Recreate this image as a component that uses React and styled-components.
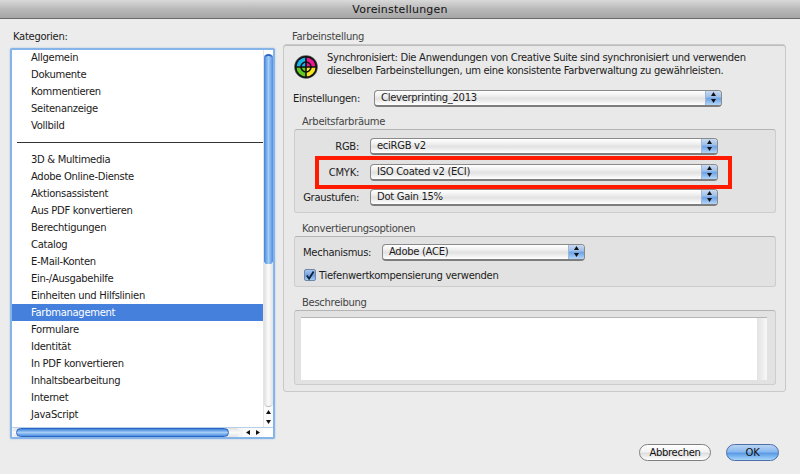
import React from "react";
import styled, { createGlobalStyle } from "styled-components";

const Global = createGlobalStyle`
  html, body { margin: 0; padding: 0; background: #ececec; }
  * { box-sizing: border-box; }
`;

const Page = styled.div`
  width: 800px;
  height: 474px;
  overflow: hidden;
  display: flex;
  flex-direction: column;
  background: #ececec;
  color: #1c1c1c;
  font-family: "DejaVu Sans", sans-serif;
  font-size: 10px;
  letter-spacing: -0.3px;
`;

const TitleBar = styled.header`
  height: 19px;
  flex: none;
  display: flex;
  align-items: center;
  justify-content: center;
  font-size: 11px;
  letter-spacing: 0.2px;
  color: #111;
  background: linear-gradient(#d9d9d9, #b9b9b9 50%, #a6a6a6);
  border-bottom: 1px solid #6c6c6c;
`;

const Main = styled.main`
  flex: 1;
  display: flex;
  padding-left: 10px;
  gap: 8px;
`;

const Sidebar = styled.section`
  width: 265px;
  display: flex;
  flex-direction: column;
`;

const SideLabel = styled.div`
  height: 14px;
  margin-top: 11px;
  margin-bottom: 4px;
  padding-left: 3px;
  line-height: 14px;
`;

const ListFrame = styled.div`
  height: 391px;
  display: flex;
  flex-direction: column;
  border: 2px solid #86b3e8;
  border-radius: 2px;
  background: #fff;
  box-shadow: 0 0 2px #9cc0ec;
`;

const ListBody = styled.div`
  flex: 1;
  min-height: 0;
  display: flex;
`;

const Rows = styled.ul`
  flex: 1;
  min-width: 0;
  list-style: none;
  margin: -1px 0 0;
  padding: 0;
  overflow: hidden;
`;

const Row = styled.li`
  height: 17px;
  line-height: 17px;
  padding-left: 19px;
  white-space: nowrap;
  color: ${(p) => (p.$active ? "#fff" : "#1c1a20")};
  background: ${(p) => (p.$active ? "#4580dc" : "transparent")};
`;

const Divider = styled.li`
  height: 17px;
  display: flex;
  align-items: center;
  padding-left: 5px;
  &::after {
    content: "";
    flex: 1;
    height: 1px;
    background: #333;
  }
`;

const VScroll = styled.div`
  width: 10px;
  flex: none;
  display: flex;
  flex-direction: column;
  background: #f6f6f6;
  border-left: 1px solid #e4e4e4;
`;

const VCap = styled.div`
  height: 4px;
  flex: none;
  background: #fff;
`;

const VThumb = styled.div`
  height: 210px;
  flex: none;
  border-radius: 5px 5px 4px 4px;
  border-top: 2px solid #2a64c4;
  background: linear-gradient(90deg, #3f82dc, #a5cdf5 50%, #4d8fe2);
`;

const VTrack = styled.div`
  flex: 1;
  border-radius: 0 0 5px 5px;
  background: linear-gradient(90deg, #e0e0e0, #fafafa 50%, #e4e4e4);
  border-bottom: 1px solid #bbb;
`;

const Arrow = styled.button`
  flex: none;
  width: ${(p) => p.$w}px;
  height: ${(p) => p.$h}px;
  padding: 0;
  border: 0;
  display: flex;
  align-items: center;
  justify-content: center;
  background: #fbfbfb;
`;

const HBar = styled.div`
  height: 10px;
  flex: none;
  display: flex;
  background: #f6f6f6;
  border-top: 1px solid #b8cfe9;
`;

const HTrack = styled.div`
  width: 228px;
  flex: none;
  display: flex;
  padding-left: 4px;
  border-radius: 5px;
  background: linear-gradient(#e0e0e0, #fafafa 50%, #e4e4e4);
`;

const HThumb = styled.div`
  width: 213px;
  border-radius: 5px;
  border: 1px solid #2a64c4;
  background: linear-gradient(#3f82dc, #a5cdf5 50%, #4d8fe2);
`;

const HEnd = styled.div`
  flex: 1;
  display: flex;
  justify-content: flex-start;
  padding-left: 3px;
`;

const HCorner = styled.div`
  width: 10px;
  flex: none;
  background: #fff;
`;

const Content = styled.section`
  width: 503px;
  display: flex;
  flex-direction: column;
`;

const Legend = styled.div`
  height: 14px;
  margin-top: ${(p) => p.$top}px;
  padding-left: ${(p) => p.$left}px;
  line-height: 14px;
  color: #444;
`;

const OuterBox = styled.div`
  height: 348px;
  padding: 0 9px 0 10px;
  border: 1px solid #c9c9c9;
  border-radius: 3px;
  background: #e9e9e9;
  box-shadow: inset 0 1px 0 #bdbdbd;
`;

const InfoRow = styled.div`
  display: flex;
  padding-top: 6px;
  gap: 9px;
`;

const InfoIcon = styled.svg`
  width: 24px;
  height: 24px;
  margin-top: 4px;
  flex: none;
`;

const InfoText = styled.p`
  margin: 0;
  line-height: 13px;
  white-space: nowrap;
`;

const SettingsRow = styled.div`
  display: flex;
  align-items: center;
  margin: 11px 0 0 -1px;
`;

const FieldLabel = styled.label`
  flex: none;
  width: ${(p) => p.$w}px;
  margin-right: ${(p) => p.$gap}px;
  text-align: ${(p) => p.$align || "left"};
  white-space: nowrap;
`;

const Group = styled.div`
  height: ${(p) => p.$h}px;
  padding: ${(p) => p.$pad}px 0 0 8px;
  border: 1px solid #cdcdcd;
  border-top-color: #b4b4b4;
  border-radius: 3px;
  background: #e2e2e2;
`;

const FieldStack = styled.div`
  display: flex;
  flex-direction: column;
  gap: 8.5px;
`;

const FieldRow = styled.div`
  position: relative;
  display: flex;
  align-items: center;
`;

const Highlight = styled.div`
  position: absolute;
  left: 12px;
  top: -8px;
  width: 417px;
  height: 33px;
  border: 4px solid #ff1a00;
  pointer-events: none;
`;

const Select = styled.div`
  width: ${(p) => p.$w}px;
  height: 17px;
  flex: none;
  display: flex;
  border: 1px solid #8a8a8a;
  border-bottom: 2px solid #7d7d7d;
  border-radius: 4px;
  overflow: hidden;
  background: linear-gradient(#ffffff, #f4f4f4 25%, #e2e2e2 55%, #f6f6f6 85%, #ffffff);
`;

const SelectValue = styled.span`
  flex: 1;
  padding-left: 6px;
  line-height: 14px;
  white-space: nowrap;
`;

const Stepper = styled.span`
  width: 16px;
  flex: none;
  display: flex;
  flex-direction: column;
  align-items: center;
  justify-content: center;
  gap: 2px;
  border-left: 1px solid #9fb6d6;
  background: linear-gradient(#c9daf2, #a0c0ea 40%, #6ea3e6 55%, #b4d6f8);
`;

const CheckRow = styled.div`
  display: flex;
  align-items: center;
  gap: 3px;
  margin: 8px 0 0 1px;
`;

const CheckBox = styled.span`
  width: 12px;
  height: 12px;
  flex: none;
  display: flex;
  align-items: center;
  justify-content: center;
  border: 1px solid #6f87a8;
  border-radius: 2px;
  background: linear-gradient(#a9c6ec, #6f9fe0 55%, #a6cdf5);
`;

const DescGroup = styled.div`
  height: 75px;
  padding: 6px 8px 4px 6px;
  border: 1px solid #cdcdcd;
  border-top-color: #b4b4b4;
  border-radius: 3px;
  background: #e2e2e2;
`;

const DescBox = styled.div`
  height: 63px;
  display: flex;
  justify-content: flex-end;
  background: #fff;
  border-top: 1px solid #b5b5b5;
`;

const DescTrack = styled.div`
  width: 10px;
  background: linear-gradient(90deg, #e2e2e2, #f8f8f8);
`;

const Footer = styled.footer`
  display: flex;
  justify-content: flex-end;
  gap: 15px;
  padding-right: 7px;
  margin-top: 52px;
`;

const Button = styled.button`
  width: ${(p) => p.$w}px;
  height: 17px;
  padding: 0;
  border-radius: 9px;
  font: inherit;
  letter-spacing: inherit;
  color: #111;
  border: 1px solid ${(p) => (p.$primary ? "#4f6ea8" : "#7f7f7f")};
  background: ${(p) =>
    p.$primary
      ? "linear-gradient(#b9d4f4, #8bb9ee 45%, #5a9ae6 55%, #a6d6fa)"
      : "linear-gradient(#ffffff, #f2f2f2 45%, #dedede 55%, #ffffff)"};
`;

const Tri = ({ d, s = 5 }) => {
  const p = {
    up: "0,4 5,4 2.5,0",
    down: "0,0 5,0 2.5,4",
    left: "4,0 4,5 0,2.5",
    right: "0,0 0,5 4,2.5",
  }[d];
  return (
    <svg width={s} height={s} viewBox="0 0 5 5" style={{ display: "block" }}>
      <polygon points={p} fill="#111" />
    </svg>
  );
};

const Dropdown = ({ w, children }) => (
  <Select $w={w}>
    <SelectValue>{children}</SelectValue>
    <Stepper>
      <Tri d="up" />
      <Tri d="down" />
    </Stepper>
  </Select>
);

const ColorIcon = () => (
  <InfoIcon viewBox="0 0 24 24">
    <circle cx="12" cy="12" r="11.8" fill="#555" />
    <circle cx="12" cy="12" r="11" fill="#111" />
    <path d="M12 12V2.5A9.5 9.5 0 0 0 2.5 12Z" fill="#19b4ea" />
    <path d="M12 12V2.5A9.5 9.5 0 0 1 21.5 12Z" fill="#ea1a90" />
    <path d="M12 12H2.5A9.5 9.5 0 0 0 12 21.5Z" fill="#5ecb1e" />
    <path d="M12 12H21.5A9.5 9.5 0 0 1 12 21.5Z" fill="#f8e71c" />
    <circle cx="12" cy="12" r="5" fill="none" stroke="#111" strokeWidth="1.6" />
    <path d="M12 1V23M1 12H23" stroke="#111" strokeWidth="1.6" />
  </InfoIcon>
);

const first = ["Allgemein", "Dokumente", "Kommentieren", "Seitenanzeige", "Vollbild"];
const second = [
  "3D & Multimedia",
  "Adobe Online-Dienste",
  "Aktionsassistent",
  "Aus PDF konvertieren",
  "Berechtigungen",
  "Catalog",
  "E-Mail-Konten",
  "Ein-/Ausgabehilfe",
  "Einheiten und Hilfslinien",
  "Farbmanagement",
  "Formulare",
  "Identität",
  "In PDF konvertieren",
  "Inhaltsbearbeitung",
  "Internet",
  "JavaScript",
  "Lesen",
];

export default function App() {
  return (
    <Page>
      <Global />
      <TitleBar>Voreinstellungen</TitleBar>
      <Main>
        <Sidebar>
          <SideLabel>Kategorien:</SideLabel>
          <ListFrame>
            <ListBody>
              <Rows>
                {first.map((t) => (
                  <Row key={t}>{t}</Row>
                ))}
                <Divider />
                {second.map((t) => (
                  <Row key={t} $active={t === "Farbmanagement"}>
                    {t}
                  </Row>
                ))}
              </Rows>
              <VScroll>
                <VCap />
                <VThumb />
                <VTrack />
                <Arrow $w={9} $h={10}>
                  <Tri d="up" />
                </Arrow>
                <Arrow $w={9} $h={10}>
                  <Tri d="down" />
                </Arrow>
              </VScroll>
            </ListBody>
            <HBar>
              <HTrack>
                <HThumb />
              </HTrack>
              <HEnd>
                <Arrow $w={10} $h={9}>
                  <Tri d="left" />
                </Arrow>
                <Arrow $w={10} $h={9}>
                  <Tri d="right" />
                </Arrow>
              </HEnd>
              <HCorner />
            </HBar>
          </ListFrame>
        </Sidebar>
        <Content>
          <Legend $top={11} $left={9}>Farbeinstellung</Legend>
          <OuterBox>
            <InfoRow>
              <ColorIcon />
              <InfoText>
                Synchronisiert: Die Anwendungen von Creative Suite sind synchronisiert und verwenden
                <br />
                dieselben Farbeinstellungen, um eine konsistente Farbverwaltung zu gewährleisten.
              </InfoText>
            </InfoRow>
            <SettingsRow>
              <FieldLabel $w={67} $gap={14}>Einstellungen:</FieldLabel>
              <Dropdown w={348}>Cleverprinting_2013</Dropdown>
            </SettingsRow>
            <Legend $top={8} $left={8}>Arbeitsfarbräume</Legend>
            <Group $h={84} $pad={8}>
              <FieldStack>
                <FieldRow>
                  <FieldLabel $w={56} $gap={11} $align="right">RGB:</FieldLabel>
                  <Dropdown w={348}>eciRGB v2</Dropdown>
                </FieldRow>
                <FieldRow>
                  <FieldLabel $w={56} $gap={11} $align="right">CMYK:</FieldLabel>
                  <Dropdown w={348}>ISO Coated v2 (ECI)</Dropdown>
                  <Highlight />
                </FieldRow>
                <FieldRow>
                  <FieldLabel $w={56} $gap={11} $align="right">Graustufen:</FieldLabel>
                  <Dropdown w={348}>Dot Gain 15%</Dropdown>
                </FieldRow>
              </FieldStack>
            </Group>
            <Legend $top={9} $left={8}>Konvertierungsoptionen</Legend>
            <Group $h={51} $pad={7}>
              <FieldRow>
                <FieldLabel $w={68} $gap={11}>Mechanismus:</FieldLabel>
                <Dropdown w={203}>Adobe (ACE)</Dropdown>
              </FieldRow>
              <CheckRow>
                <CheckBox>
                  <svg width="11" height="11" viewBox="0 0 11 11">
                    <path d="M2 5.5L4.5 9L9.5 1" fill="none" stroke="#10203a" strokeWidth="2" />
                  </svg>
                </CheckBox>
                <span>Tiefenwertkompensierung verwenden</span>
              </CheckRow>
            </Group>
            <Legend $top={9} $left={8}>Beschreibung</Legend>
            <DescGroup>
              <DescBox>
                <DescTrack />
              </DescBox>
            </DescGroup>
          </OuterBox>
          <Footer>
            <Button $w={72}>Abbrechen</Button>
            <Button $w={53} $primary>OK</Button>
          </Footer>
        </Content>
      </Main>
    </Page>
  );
}
